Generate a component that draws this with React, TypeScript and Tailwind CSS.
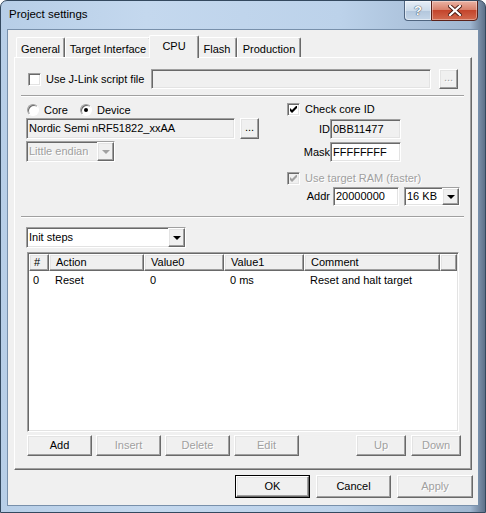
import React from 'react';

// classic 3D edges
const sunken =
  'border border-t-[#a0a0a0] border-l-[#a0a0a0] border-r-white border-b-white shadow-[inset_1px_1px_0_#696969,inset_-1px_-1px_0_#e3e3e3]';
const raised =
  'border border-t-white border-l-white border-r-[#696969] border-b-[#696969] shadow-[inset_-1px_-1px_0_#a0a0a0,inset_1px_1px_0_#e3e3e3]';
const grayText = 'text-[#a0a0a0] [text-shadow:1px_1px_0_#fff]';

function Arrow({ disabled }: { disabled?: boolean }) {
  return (
    <div
      className={`w-0 h-0 border-l-[4px] border-r-[4px] border-t-[4px] border-l-transparent border-r-transparent ${
        disabled ? 'border-t-[#a0a0a0]' : 'border-t-black'
      }`}
    />
  );
}

function Check({ checked, disabled }: { checked?: boolean; disabled?: boolean }) {
  return (
    <div
      className={`${sunken} w-[13px] h-[13px] shrink-0 flex items-center justify-center ${
        disabled ? 'bg-[#f0f0f0]' : 'bg-white'
      }`}
    >
      {checked && (
        <svg width="7" height="7" viewBox="0 0 7 7">
          <path d="M0 2 L2 4 L6 0 L7 0 L7 2 L2 7 L0 5 Z" fill={disabled ? '#a0a0a0' : '#000'} />
        </svg>
      )}
    </div>
  );
}

function Radio({ on }: { on?: boolean }) {
  return (
    <div className="w-[12px] h-[12px] shrink-0 rounded-full border border-t-[#a0a0a0] border-l-[#a0a0a0] border-r-white border-b-white bg-white shadow-[inset_1px_1px_0_#696969] flex items-center justify-center">
      {on && <div className="w-[4px] h-[4px] rounded-full bg-black" />}
    </div>
  );
}

function Combo({ value, className, disabled }: { value: string; className: string; disabled?: boolean }) {
  return (
    <div className={`${sunken} ${className} flex ${disabled ? 'bg-[#f0f0f0]' : 'bg-white'}`}>
      <span className={`flex-1 pl-[2px] self-center ${disabled ? grayText : ''}`}>{value}</span>
      <div className={`${raised} w-[17px] bg-[#f0f0f0] flex items-center justify-center`}>
        <Arrow disabled={disabled} />
      </div>
    </div>
  );
}

function Button({ label, className, disabled }: { label: string; className: string; disabled?: boolean }) {
  return (
    <div className={`${raised} ${className} bg-[#f0f0f0] flex items-center justify-center ${disabled ? grayText : ''}`}>
      {label}
    </div>
  );
}

function Separator() {
  return <div className="-ml-[5px] w-[443px] h-[2px] border-t border-t-[#a0a0a0] border-b border-b-white" />;
}

function Tab({ label, className, active }: { label: string; className: string; active?: boolean }) {
  return (
    <div
      className={`${className} ${
        active ? 'h-[23px] -mx-[2px] -mb-[1px] relative z-10 pb-[2px]' : 'h-[20px] pt-[3px]'
      } flex items-center justify-center bg-[#f0f0f0] rounded-t-[2px] border-t border-l border-r border-t-white border-l-white border-r-[#696969] shadow-[inset_-1px_0_0_#a0a0a0]`}
    >
      {label}
    </div>
  );
}

const columns = [
  { name: '#', w: 'w-[20px] pl-[4px]' },
  { name: 'Action', w: 'w-[95px] pl-[6px]' },
  { name: 'Value0', w: 'w-[80px] pl-[6px]' },
  { name: 'Value1', w: 'w-[80px] pl-[6px]' },
  { name: 'Comment', w: 'w-[136px] pl-[6px]' },
];

const steps = [{ n: '0', action: 'Reset', v0: '0', v1: '0 ms', comment: 'Reset and halt target' }];

function TitleBar() {
  return (
    <div className="h-[28px] flex shrink-0">
      <span className="pl-[8px] self-center text-[11.5px] text-black">Project settings</span>
      <div className="ml-auto mr-[7px] -mt-[1px] flex">
        <div className="w-[27px] h-[21px] border border-[#4f6580] border-r-0 rounded-bl-[4px] bg-[linear-gradient(180deg,#e6eef7_0%,#ccdbea_50%,#b2c6dc_51%,#c5d6e8_100%)] shadow-[inset_0_0_0_1px_rgba(255,255,255,0.5)] flex items-center justify-center">
          <span className="text-[13px] font-bold text-white [text-shadow:0_0_1px_#2c3e55,0_0_1px_#2c3e55]">?</span>
        </div>
        <div className="w-[47px] h-[21px] border border-[#5b2119] rounded-br-[4px] bg-[linear-gradient(180deg,#eab3a4_0%,#d9826d_45%,#c4452c_50%,#d26a4f_100%)] shadow-[inset_0_0_0_1px_rgba(255,255,255,0.35)] flex items-center justify-center">
          <svg width="14" height="11" viewBox="0 0 14 11">
            <path d="M2 1 L12 10 M12 1 L2 10" stroke="#4a1a12" strokeWidth="4" strokeLinecap="square" />
            <path d="M2 1 L12 10 M12 1 L2 10" stroke="#fff" strokeWidth="2.2" strokeLinecap="square" />
          </svg>
        </div>
      </div>
    </div>
  );
}

function CpuPane() {
  return (
    <div className="h-[413px] shrink-0 flex flex-col pl-[11px] bg-[#f0f0f0] border border-t-white border-l-white border-r-[#696969] border-b-[#696969] shadow-[inset_-1px_-1px_0_#a0a0a0]">
      {/* script file */}
      <div className="mt-[11px] h-[20px] flex items-center">
        <div className="w-[125px] pl-[2px] flex items-center gap-[5px]">
          <Check />
          <span>Use J-Link script file</span>
        </div>
        <div className={`${sunken} w-[280px] h-[20px] bg-[#f0f0f0]`} />
        <Button label="..." className={`ml-[8px] w-[19px] h-[20px] pb-[3px]`} disabled />
      </div>
      <div className="mt-[6px]">
        <Separator />
      </div>

      {/* core / device */}
      <div className="h-[119px] flex">
        <div className="w-[261px] flex flex-col">
          <div className="mt-[6px] h-[14px] flex items-center">
            <div className="w-[54px] pl-[1px] flex items-center gap-[5px]">
              <Radio />
              <span>Core</span>
            </div>
            <div className="flex items-center gap-[5px]">
              <Radio on />
              <span>Device</span>
            </div>
          </div>
          <div className="mt-[1px] h-[21px] flex">
            <div className={`${sunken} w-[209px] bg-[#f0f0f0] pl-[2px] flex items-center`}>Nordic Semi nRF51822_xxAA</div>
            <Button label="..." className="ml-[5px] w-[19px] h-[21px] pb-[3px]" />
          </div>
          <Combo value="Little endian" className="mt-[2px] w-[89px] h-[21px]" disabled />
        </div>

        <div className="flex flex-col">
          <div className="mt-[5px] h-[15px] flex items-center gap-[5px]">
            <Check checked />
            <span>Check core ID</span>
          </div>
          <div className="mt-[2px] h-[20px] flex">
            <span className="w-[43px] text-right self-center">ID</span>
            <div className={`${sunken} w-[71px] bg-[#f0f0f0] pl-[2px] flex items-center`}>0BB11477</div>
          </div>
          <div className="mt-[3px] h-[20px] flex">
            <span className="w-[43px] text-right self-center">Mask</span>
            <div className={`${sunken} w-[71px] bg-white pl-[2px] flex items-center`}>FFFFFFFF</div>
          </div>
          <div className="mt-[9px] h-[15px] flex items-center gap-[5px]">
            <Check checked disabled />
            <span className={grayText}>Use target RAM (faster)</span>
          </div>
          <div className="mt-[1px] h-[19px] flex">
            <span className="w-[43px] text-right self-center">Addr</span>
            <div className={`${sunken} ml-[3px] w-[66px] bg-white pl-[2px] flex items-center`}>20000000</div>
            <Combo value="16 KB" className="ml-[5px] w-[56px]" />
          </div>
        </div>
      </div>
      <Separator />

      {/* init steps */}
      <Combo value="Init steps" className="mt-[9px] w-[160px] h-[21px]" />
      <div className={`${sunken} mt-[4px] ml-[1px] w-[432px] h-[180px] bg-white p-[1px] flex flex-col`}>
        <div className="h-[17px] flex shrink-0">
          {columns.map((c) => (
            <div key={c.name} className={`${raised} ${c.w} bg-[#f0f0f0] flex items-center`}>
              {c.name}
            </div>
          ))}
          <div className={`${raised} flex-1 bg-[#f0f0f0]`} />
        </div>
        {steps.map((s) => (
          <div key={s.n} className="h-[18px] flex items-center">
            <span className={`${columns[0].w}`}>{s.n}</span>
            <span className={`${columns[1].w}`}>{s.action}</span>
            <span className={`${columns[2].w}`}>{s.v0}</span>
            <span className={`${columns[3].w}`}>{s.v1}</span>
            <span className={`${columns[4].w}`}>{s.comment}</span>
          </div>
        ))}
      </div>
      <div className="mt-[3px] ml-[1px] mr-[10px] h-[21px] flex gap-[4px]">
        <Button label="Add" className="w-[65px]" />
        <Button label="Insert" className="w-[65px]" disabled />
        <Button label="Delete" className="w-[65px]" disabled />
        <Button label="Edit" className="w-[65px]" disabled />
        <Button label="Up" className="ml-auto w-[50px]" disabled />
        <Button label="Down" className="ml-[1px] w-[50px]" disabled />
      </div>
    </div>
  );
}

export default function App() {
  return (
    <div className="w-[486px] h-[513px] flex flex-col overflow-hidden rounded-t-[7px] border border-[#34495f] bg-[linear-gradient(90deg,#b7cee7_0%,#c4d8ee_30%,#bcd2ea_70%,#9fb6d0_97%,#5d7089_100%)] font-['Liberation_Sans',Arial,sans-serif] text-[11px] text-black">
      <TitleBar />
      <div className="mx-[6px] mb-[6px] flex-1 flex flex-col px-[6px] pt-[5px] border border-[#7890ab] bg-[#f0f0f0]">
        <div className="h-[22px] pl-[2px] flex items-end shrink-0">
          <Tab label="General" className="w-[49px]" />
          <Tab label="Target Interface" className="w-[86px]" />
          <Tab label="CPU" className="w-[50px]" active />
          <Tab label="Flash" className="w-[40px]" />
          <Tab label="Production" className="w-[64px]" />
        </div>
        <CpuPane />
        <div className="mt-[5px] -mr-[1px] h-[23px] flex justify-end gap-[6px]">
          <div className="w-[75px] border border-black flex">
            <Button label="OK" className="flex-1" />
          </div>
          <Button label="Cancel" className="w-[75px]" />
          <Button label="Apply" className="w-[76px]" disabled />
        </div>
      </div>
    </div>
  );
}
